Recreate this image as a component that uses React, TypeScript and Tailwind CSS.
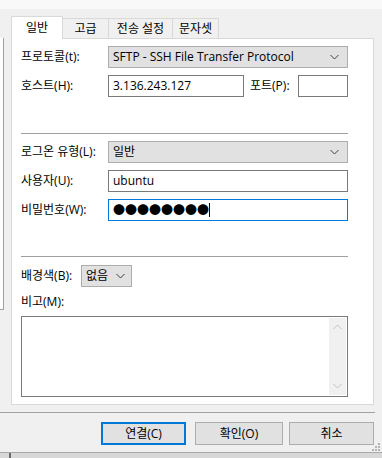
import React from 'react';

const FONT = { fontFamily: '"Open Sans", "Noto Sans CJK KR", sans-serif' };

const Chevron: React.FC<{ up?: boolean; color?: string }> = ({ up, color = '#404040' }) => (
  <svg width="9" height="6" viewBox="0 0 9 6">
    <polyline
      points={up ? '0.5,5 4.5,1 8.5,5' : '0.5,1 4.5,5 8.5,1'}
      fill="none"
      stroke={color}
      strokeWidth="1"
    />
  </svg>
);

const Select: React.FC<{ value: string; className: string }> = ({ value, className }) => (
  <div className={`flex items-center justify-between h-[22px] bg-[#e1e1e1] border border-[#adadad] pl-[4px] pr-[8px] text-[12px] ${className}`}>
    <span>{value}</span>
    <Chevron />
  </div>
);

const Input: React.FC<{ value?: string; className: string; focused?: boolean; children?: React.ReactNode }> = ({ value, className, focused, children }) => (
  <div className={`flex items-center h-[22px] bg-white border pl-[4px] text-[12px] ${focused ? 'border-[#0078d7]' : 'border-[#7a7a7a]'} ${className}`}>
    {value}
    {children}
  </div>
);

const Label: React.FC<{ text: string; className?: string }> = ({ text, className = 'w-[87px]' }) => (
  <div className={`text-[12px] shrink-0 ${className}`}>{text}</div>
);

const Tab: React.FC<{ label: string; w: string; active?: boolean }> = ({ label, w, active }) =>
  active ? (
    <div className={`${w} h-[23px] -mb-px relative z-10 bg-white border border-b-0 border-[#d9d9d9] flex items-center justify-center text-[12px]`}>
      {label}
    </div>
  ) : (
    <div className={`${w} h-[20px] -ml-px bg-[#f0f0f0] border border-b-0 border-[#d9d9d9] flex items-center justify-center text-[12px]`}>
      {label}
    </div>
  );

const Button: React.FC<{ label: string; w: string; primary?: boolean }> = ({ label, w, primary }) => (
  <div className={`${w} h-[23px] flex items-center justify-center bg-[#e1e1e1] text-[12px] ${primary ? 'border-2 border-[#0078d7]' : 'border border-[#adadad]'}`}>
    {label}
  </div>
);

export default function App() {
  return (
    <div className="relative w-[382px] h-[458px] bg-[#f0f0f0] overflow-hidden text-black" style={FONT}>
      <div className="h-[9px] bg-[#f9f9f9]" />
      <div className="flex">
        {/* site tree edge */}
        <div className="w-[4px] h-[272px] mt-[29px] bg-white border-r border-b border-[#a0a0a0]" />
        <div className="ml-[7px] pt-[7px]">
          <div className="flex items-end h-[22px]">
            <Tab label="일반" w="w-[52px]" active />
            <Tab label="고급" w="w-[47px]" />
            <Tab label="전송 설정" w="w-[65px]" />
            <Tab label="문자셋" w="w-[47px]" />
          </div>
          <div className="w-[363px] h-[367px] bg-white border border-[#d9d9d9] pl-[9px]">
            <div className="flex items-center mt-[7px]">
              <Label text="프로토콜(t):" />
              <Select value="SFTP - SSH File Transfer Protocol" className="w-[240px]" />
            </div>
            <div className="flex items-center mt-[7px]">
              <Label text="호스트(H):" />
              <Input value="3.136.243.127" className="w-[136px]" />
              <Label text="포트(P):" className="ml-[6px] w-[48px]" />
              <Input className="w-[50px]" />
            </div>
            <div className="mt-[36px] w-[327px] h-px bg-[#a0a0a0]" />
            <div className="flex items-center mt-[7px]">
              <Label text="로그온 유형(L):" />
              <Select value="일반" className="w-[240px]" />
            </div>
            <div className="flex items-center mt-[7px]">
              <Label text="사용자(U):" />
              <Input value="ubuntu" className="w-[240px]" />
            </div>
            <div className="flex items-center mt-[7px]">
              <Label text="비밀번호(W):" />
              <Input focused className="w-[240px]">
                <span className="text-[12px] leading-none" style={{ fontFamily: '"Noto Sans CJK KR", sans-serif' }}>
                  ●●●●●●●●
                </span>
                <span className="w-px h-[14px] bg-black" />
              </Input>
            </div>
            <div className="mt-[35px] w-[327px] h-px bg-[#a0a0a0]" />
            <div className="flex items-center mt-[8px]">
              <Label text="배경색(B):" className="w-[60px]" />
              <Select value="없음" className="w-[51px] !pr-[6px]" />
            </div>
            <div className="mt-[7px] h-[16px] flex items-center text-[12px]">비고(M):</div>
            <div className="relative mt-[6px] w-[327px] h-[81px] bg-white border border-[#7a7a7a]">
              <div className="absolute right-px top-px bottom-px w-[17px] bg-[#f0f0f0] flex flex-col items-center justify-between py-[6px]">
                <Chevron up color="#c2c2c2" />
                <Chevron color="#c2c2c2" />
              </div>
            </div>
          </div>
        </div>
      </div>
      <div className="mt-[7px] w-[375px] h-px bg-[#a0a0a0]" />
      <div className="flex mt-[9px] pl-[101px]">
        <Button label="연결(C)" w="w-[85px]" primary />
        <div className="ml-[9px]">
          <Button label="확인(O)" w="w-[88px]" />
        </div>
        <div className="ml-[6px]">
          <Button label="취소" w="w-[85px]" />
        </div>
      </div>
      <svg className="absolute right-[2px] bottom-[7px]" width="9" height="9" viewBox="0 0 9 9">
        {[
          [7, 1],
          [4, 4],
          [7, 4],
          [1, 7],
          [4, 7],
          [7, 7],
        ].map(([x, y]) => (
          <rect key={`${x}-${y}`} x={x} y={y} width="2" height="2" fill="#b4b4b4" />
        ))}
      </svg>
      <div className="absolute left-0 right-0 bottom-0 h-[6px] bg-[#d8d8d8] border-t border-[#a8a8a8]">
        <div className="absolute left-[9px] top-0 bottom-0 w-[2px] bg-[#6a6a6a]" />
      </div>
    </div>
  );
}
